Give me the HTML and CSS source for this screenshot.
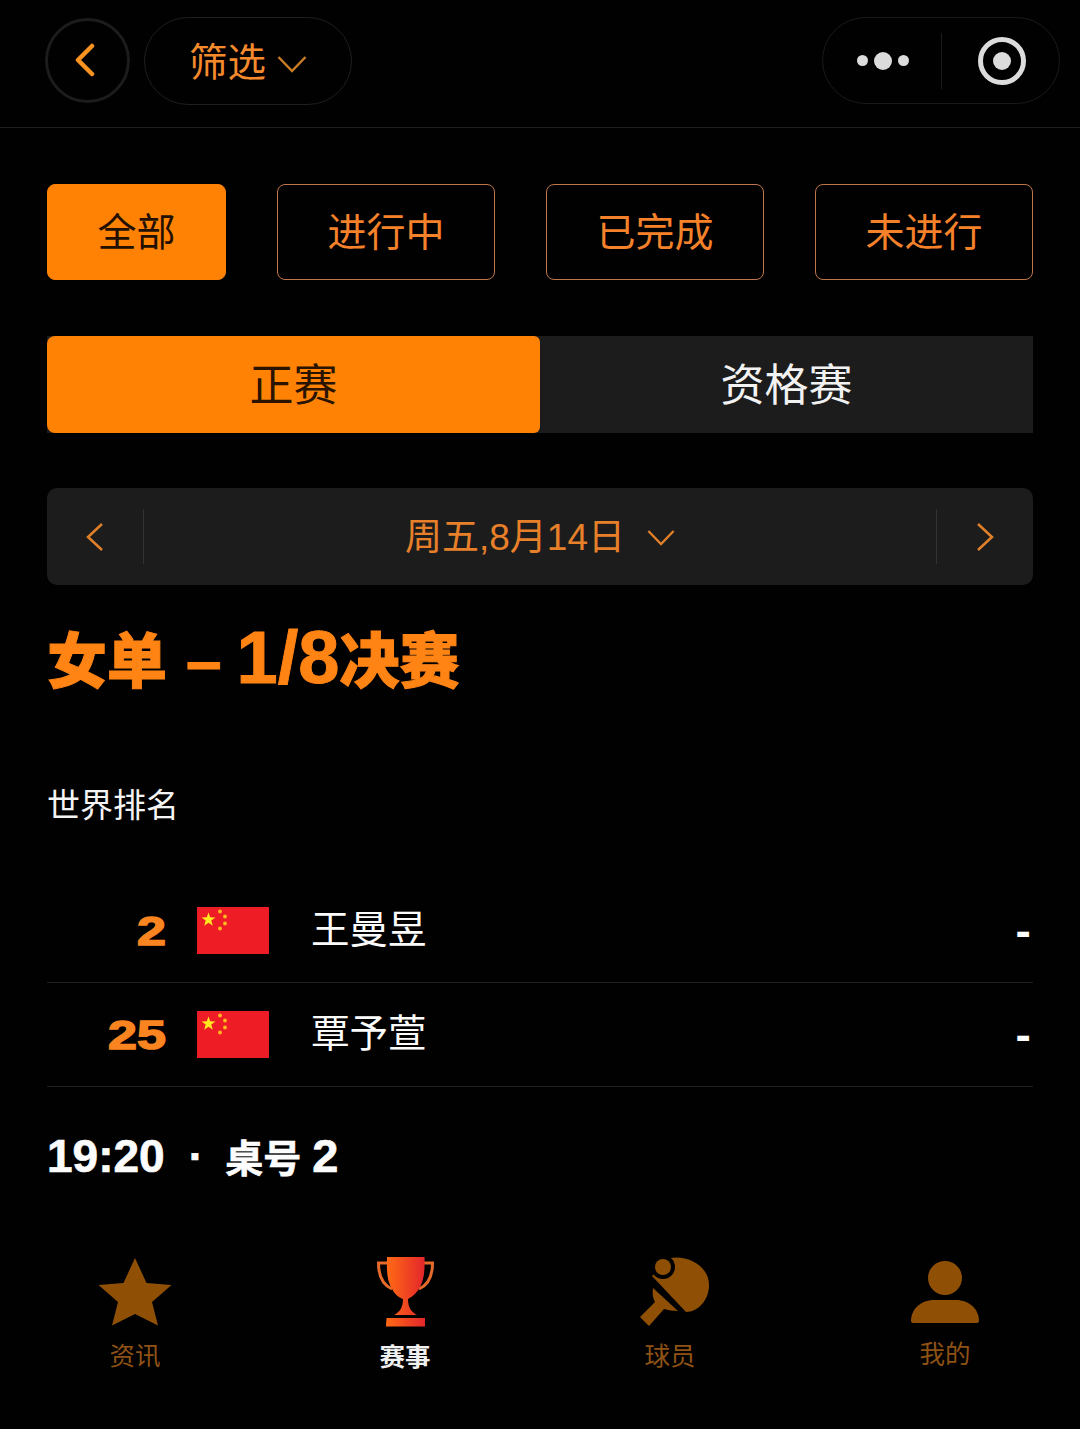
FILE: index.html
```html
<!DOCTYPE html>
<html lang="zh-CN">
<head>
<meta charset="utf-8">
<title>赛事</title>
<link rel="stylesheet" href="styles.css">
</head>
<body>
<div class="page">
  <header class="topbar">
    <div class="back-btn">
      <svg class="back-icon" viewBox="0 0 20 34"><path d="M17 3 L3 17 L17 31" /></svg>
    </div>
    <div class="filter-pill">
      <span class="pill-text">筛选</span>
      <svg class="pill-chev" viewBox="0 0 30 18"><path d="M1.5 2 L15 16 L28.500 2" /></svg>
    </div>
    <div class="capsule">
      <div class="dots"><i class="dot"></i><i class="dot big"></i><i class="dot"></i></div>
      <div class="capsule-line"></div>
      <div class="target"><i class="target-core"></i></div>
    </div>
  </header>

  <main class="content">
    <div class="status-row">
      <div class="status active first">全部</div>
      <div class="status">进行中</div>
      <div class="status">已完成</div>
      <div class="status">未进行</div>
    </div>

    <div class="segment">
      <div class="seg on">正赛</div>
      <div class="seg">资格赛</div>
    </div>

    <div class="datebar">
      <div class="date-side left">
        <svg class="date-arrow" viewBox="0 0 18 30"><path d="M16 2 L2 15 L16 28" /></svg>
      </div>
      <div class="date-mid">
        <span class="date-text">周五,8月14日</span>
        <svg class="date-chev" viewBox="0 0 30 18"><path d="M1.500 2 L15 16 L28.500 2" /></svg>
      </div>
      <div class="date-side right">
        <svg class="date-arrow" viewBox="0 0 18 30"><path d="M2 2 L16 15 L2 28" /></svg>
      </div>
    </div>

    <h1 class="title">女单<span class="title-dash">–</span><span class="title-num">1/8</span>决赛</h1>
    <div class="rank-label">世界排名</div>

    <div class="players">
      <div class="player">
        <span class="rank">2</span>
        <svg class="flag" viewBox="0 0 72 47"><use href="#cn-flag"/></svg>
        <span class="name">王曼昱</span>
        <span class="score">-</span>
      </div>
      <div class="player">
        <span class="rank">25</span>
        <svg class="flag" viewBox="0 0 72 47"><use href="#cn-flag"/></svg>
        <span class="name">覃予萱</span>
        <span class="score">-</span>
      </div>
    </div>

    <div class="match-time"><span class="time-num">19:20</span><span class="sep">·</span><span class="time-cjk">桌号</span><span class="time-table">2</span></div>
  </main>

  <nav class="tabbar">
    <div class="tab">
      <svg class="tab-icon star" viewBox="0 0 74 68"><path d="M37 0 L48.500 25 L73.500 27 L54 44 L60 67.500 L37 56 L14 67.500 L20 44 L0.500 27 L25.500 25 Z"/></svg>
      <span class="tab-text">资讯</span>
    </div>
    <div class="tab current">
      <svg class="tab-icon trophy" viewBox="0 0 57 70">
        <defs>
          <linearGradient id="cup" x1="0" x2="1" y1="0" y2="0">
            <stop offset="0" stop-color="#ff6a14"/>
            <stop offset="1" stop-color="#e3262c"/>
          </linearGradient>
        </defs>
        <path class="handle" d="M10 6 H1.500 C1.500 20 6 28 15 32"/>
        <path class="handle" d="M47 6 H55.500 C55.500 20 51 28 42 32"/>
        <path fill="url(#cup)" d="M10 0 H47.500 C48 14 47 24 42 32 C38 38 33 41 31 42 C31 50 34 55 40 58 H17 C23 55 26 50 26 42 C23 41 18 38 15 32 C10 24 9.500 14 10 0 Z"/>
        <path fill="url(#cup)" d="M9.500 61 H48 V69.500 H9 Z"/>
      </svg>
      <span class="tab-text">赛事</span>
    </div>
    <div class="tab shift">
      <svg class="tab-icon paddle" viewBox="0 0 69 69">
        <path d="M12 19 L31 1 C46 -2 69 8 69 28 C69 44 57 55 46 55 Z"/>
        <circle class="ball-gap" cx="23" cy="10" r="12"/>
        <circle cx="23" cy="10" r="8"/>
        <path d="M13 31 L38 54 C33 54 28 53 24 52 L9 69 L0 60 L15 45 C13 41 12 37 13 31 Z"/>
      </svg>
      <span class="tab-text">球员</span>
    </div>
    <div class="tab mine">
      <svg class="tab-icon person" viewBox="0 0 68 62">
        <circle cx="34" cy="17" r="17"/>
        <path d="M0 60 C0 48 10 39 23 39 H45 C58 39 68 48 68 60 C68 61 67 62 66 62 H2 C1 62 0 61 0 60 Z"/>
      </svg>
      <span class="tab-text">我的</span>
    </div>
  </nav>
</div>

<svg class="defs-holder" aria-hidden="true">
  <defs>
    <g id="cn-flag">
      <rect width="72" height="47" fill="#ee1c25"/>
      <path fill="#ffe81f" d="M11.500 5.500 L13.200 10.300 L18.500 10.400 L14.300 13.600 L15.800 18.700 L11.500 15.700 L7.200 18.700 L8.700 13.600 L4.500 10.400 L9.800 10.300 Z"/>
      <circle cx="23" cy="4.500" r="1.900" fill="#ffb81f"/>
      <circle cx="28" cy="9.500" r="1.900" fill="#ffb81f"/>
      <circle cx="28" cy="16.500" r="1.900" fill="#ffb81f"/>
      <circle cx="23" cy="21.500" r="1.900" fill="#ffb81f"/>
    </g>
  </defs>
</svg>
</body>
</html>
```
FILE: styles.css
```css
* { box-sizing: border-box; }
html, body { margin: 0; padding: 0; background: #000; }
body { font-family: "Noto Sans CJK SC", "Liberation Sans", sans-serif; }
.page { width: 1080px; height: 1429px; overflow: hidden; background: #010102; display: flex; flex-direction: column; }
.defs-holder { width: 0; height: 0; display: block; }

.topbar { height: 128px; flex: none; border-bottom: 1px solid #1e1e1e; display: flex; align-items: flex-start; padding: 17px 20px 0 45px; }
.back-btn { width: 85px; height: 85px; margin-top: 1px; border-radius: 50%; border: 3px solid #1c1c1c; display: flex; align-items: center; justify-content: center; padding-right: 5px; padding-bottom: 1px; }
.back-icon { width: 20px; height: 34px; fill: none; stroke: #f9921e; stroke-width: 4.500; stroke-linecap: round; stroke-linejoin: round; }
.filter-pill { width: 208px; height: 88px; margin-left: 14px; border-radius: 44px; border: 1px solid #1e1e1e; display: flex; align-items: center; padding-left: 44px; color: #f58a2c; font-size: 38.500px; }
.pill-text { padding-bottom: 5px; line-height: 50px; }
.pill-chev { width: 30px; height: 18px; margin-left: 11px; margin-top: 6px; fill: none; stroke: #c87c25; stroke-width: 2.500; }
.capsule { width: 238px; height: 87px; margin-left: auto; border-radius: 44px; border: 1px solid #1a1a1a; display: flex; align-items: center; }
.dots { display: flex; align-items: center; gap: 6px; margin-left: 34px; }
.dot { width: 11px; height: 11px; border-radius: 50%; background: #dcdcdc; }
.dot.big { width: 18px; height: 18px; }
.capsule-line { width: 1px; height: 56px; background: #1c1c1c; margin-left: 32px; }
.target { width: 48px; height: 48px; border-radius: 50%; border: 5px solid #dcdcdc; margin-left: 36px; display: flex; align-items: center; justify-content: center; }
.target-core { width: 18px; height: 18px; border-radius: 50%; background: #dcdcdc; }

.content { flex: none; padding: 56px 47px 0; }
.status-row { display: flex; gap: 51px; }
.status { width: 218px; height: 96px; border: 1px solid #c0764a; border-radius: 8px; color: #f5822a; font-size: 39px; display: flex; align-items: center; justify-content: center; padding-bottom: 6px; }
.status.first { width: 179px; }
.status.active { background: #ff8205; border-color: #ff8205; color: #231000; }

.segment { margin-top: 56px; height: 97px; background: #1c1c1c; display: grid; grid-template-columns: 1fr 1fr; }
.seg { color: #f2f2f2; font-size: 44px; display: flex; align-items: center; justify-content: center; padding-bottom: 5px; }
.seg.on { background: #ff8205; color: #2a1400; border-radius: 8px 6px 6px 8px; }

.datebar { margin-top: 55px; height: 97px; background: #1c1c1c; border-radius: 10px; display: flex; align-items: center; }
.date-side { width: 97px; height: 55px; display: flex; align-items: center; justify-content: center; }
.date-side.left { border-right: 1px solid #333; }
.date-side.right { border-left: 1px solid #333; }
.date-arrow { width: 18px; height: 30px; fill: none; stroke: #e2802a; stroke-width: 2.500; }
.date-mid { flex: 1; display: flex; align-items: center; justify-content: center; color: #e8802a; font-size: 37px; font-family: "Liberation Sans", "Noto Sans CJK SC", sans-serif; }
.date-text { padding-bottom: 6px; }
.date-chev { width: 28px; height: 17px; margin-left: 22px; margin-top: 1px; fill: none; stroke: #e2802a; stroke-width: 2.500; }

.title { margin: 43px 0 0; height: 60px; font-size: 60px; line-height: 60px; font-weight: 900; color: #ff8414; -webkit-text-stroke: 1px #ff8414; font-family: "Liberation Sans", "Noto Sans CJK SC", sans-serif; white-space: nowrap; display: flex; align-items: baseline; }
.title-dash { font-size: 64px; margin: 0 15px 0 19px; }
.title-num { font-size: 74px; }
.rank-label { margin-top: 97px; height: 40px; line-height: 36px; font-size: 33px; color: #f4f4f4; }

.players { margin-top: 54px; }
.player { height: 104px; border-bottom: 1px solid #1e1e1e; display: flex; align-items: center; }
.rank { width: 119px; text-align: right; font-family: "Liberation Sans", sans-serif; font-weight: 700; font-size: 41px; color: #fa8420; -webkit-text-stroke: 1.5px #fa8420; transform: scaleX(1.27); transform-origin: right center; padding-top: 1px; }
.flag { width: 72px; height: 47px; margin-left: 31px; flex: none; }
.name { margin-left: 42px; font-size: 38.500px; color: #fbfbfb; padding-bottom: 10px; }
.score { margin-left: auto; font-family: "DejaVu Sans", sans-serif; font-weight: 700; font-size: 38px; color: #fff; margin-right: 2px; margin-top: 2px; }

.match-time { margin-top: 44px; height: 50px; color: #fcfcfc; font-weight: 700; font-family: "Liberation Sans", "Noto Sans CJK SC", sans-serif; display: flex; align-items: baseline; white-space: nowrap; line-height: 50px; -webkit-text-stroke: 0.7px #fcfcfc; }
.time-num { font-size: 46px; }
.sep { font-size: 44px; margin: 0 22px 0 24px; }
.time-cjk { font-size: 38px; }
.time-table { font-size: 47px; margin-left: 11px; }

.tabbar { margin-top: 76px; display: grid; grid-template-columns: repeat(4, 270px); }
.tab { display: flex; flex-direction: column; align-items: center; color: #8d5214; font-size: 25.500px; }
.tab.current { color: #f0f0f0; font-weight: 700; }
.tab.shift { padding-right: 10px; }
.tab-icon { display: block; fill: #8f5006; }
.star { width: 74px; height: 68px; margin-top: 1px; }
.trophy { width: 57px; height: 70px; }
.paddle { width: 69px; height: 69px; margin-left: 9px; }
.person { width: 68px; height: 62px; margin-top: 4px; }
.handle { fill: none; stroke: #e66a2a; stroke-width: 3; }
.ball-gap { fill: #010102; }
.tab-text { line-height: 30px; margin-top: 13px; }
.mine .tab-text { margin-top: 14px; }
```
